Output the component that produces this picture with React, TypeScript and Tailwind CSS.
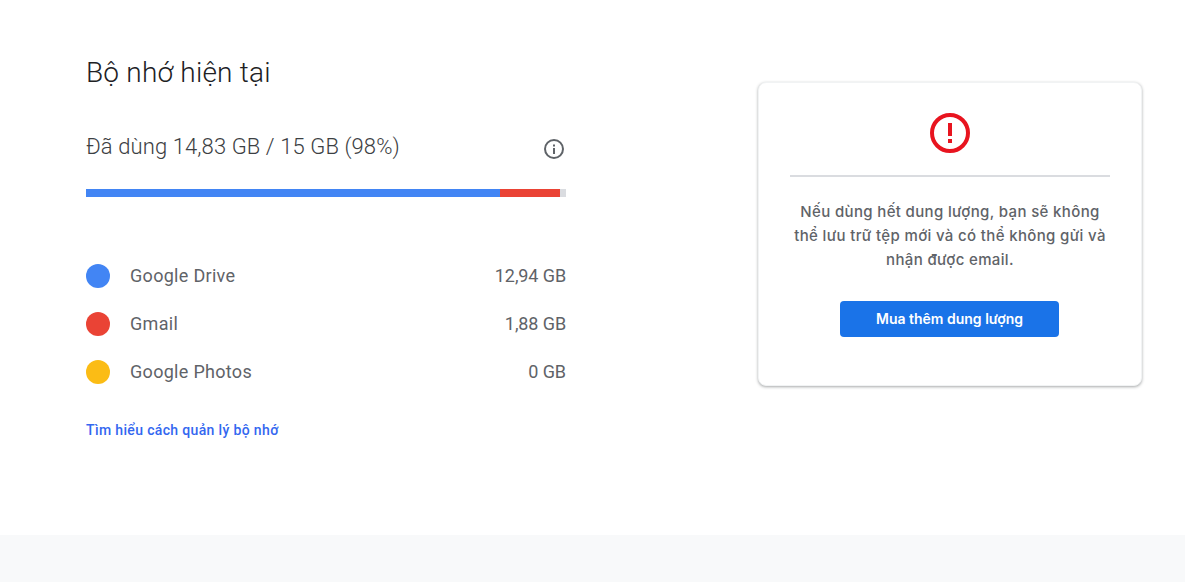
const font = "font-['Roboto','Noto_Sans',sans-serif]";

const usage = [
  { name: 'Google Drive', size: '12,94 GB', color: 'bg-[#4285f4]' },
  { name: 'Gmail', size: '1,88 GB', color: 'bg-[#ea4335]' },
  { name: 'Google Photos', size: '0 GB', color: 'bg-[#fbbc15]' },
];

function InfoIcon() {
  return (
    <svg width="22" height="22" viewBox="0 0 22 22" fill="none">
      <circle cx="11" cy="11" r="9" stroke="#5f6368" strokeWidth="2" />
      <rect x="10" y="10" width="2" height="6" fill="#5f6368" />
      <rect x="10" y="6.5" width="2" height="2" fill="#5f6368" />
    </svg>
  );
}

function AlertIcon() {
  return (
    <svg width="40" height="40" viewBox="0 0 40 40" fill="none">
      <circle cx="20" cy="20" r="18" stroke="#e8141f" strokeWidth="4" />
      <rect x="18" y="10" width="4" height="13" fill="#e8141f" />
      <rect x="18" y="26" width="4" height="4" fill="#e8141f" />
    </svg>
  );
}

export default function App() {
  return (
    <div className={`h-[582px] flex flex-col bg-white overflow-hidden ${font}`}>
      <div className="h-[535px] flex items-start">
        <div className="w-[480px] ml-[86px] pt-[55px]">
          <h1 className="text-[28px] leading-9 font-light tracking-[0.2px] text-[#202124]">Bộ nhớ hiện tại</h1>

          <div className="flex justify-between mt-[40px] h-[32px]">
            <p className="text-[22px] leading-8 font-light tracking-[0.1px] text-[#3c4043]">Đã dùng 14,83 GB / 15 GB (98%)</p>
            <div className="mt-[7px] mr-[1px]">
              <InfoIcon />
            </div>
          </div>

          <div className="flex h-2 mt-[26px] bg-[#dadce0]">
            <div className="w-[414px] bg-[#4285f4]" />
            <div className="w-[60px] bg-[#ea4335]" />
          </div>

          <div className="flex flex-col gap-6 mt-[67px]">
            {usage.map((item) => (
              <div key={item.name} className="flex items-center h-6">
                <div className={`w-6 h-6 rounded-full ${item.color}`} />
                <span className="ml-5 text-lg tracking-[0.3px] text-[#5f6368]">{item.name}</span>
                <span className="ml-auto text-lg tracking-[-0.1px] text-[#5f6368]">{item.size}</span>
              </div>
            ))}
          </div>

          <a href="#" className="block mt-[36px] text-sm leading-5 tracking-[0.35px] font-medium text-[#3367f0]">
            Tìm hiểu cách quản lý bộ nhớ
          </a>
        </div>

        <div className="w-[384px] h-[304px] ml-[192px] mt-[82px] rounded-lg bg-white border border-[#f1f3f4] shadow-[0_1px_3px_rgba(60,64,67,0.45)] flex flex-col items-center px-[31px]">
          <div className="mt-[30px]">
            <AlertIcon />
          </div>
          <div className="w-full h-0.5 bg-[#dadce0] mt-[22px]" />
          <p className="mt-[23px] font-['Inter',sans-serif] text-center text-[15px] leading-6 tracking-[0.35px] font-medium text-[#5f6368]">
            Nếu dùng hết dung lượng, bạn sẽ không thể lưu trữ tệp mới và có thể không gửi và nhận được email.
          </p>
          <button className="mt-[29px] ml-[-1px] w-[219px] h-9 rounded bg-[#1a73e8] text-white font-['Inter',sans-serif] text-sm font-semibold">
            Mua thêm dung lượng
          </button>
        </div>
      </div>
      <div className="flex-1 bg-[#f8f9fa]" />
    </div>
  );
}
